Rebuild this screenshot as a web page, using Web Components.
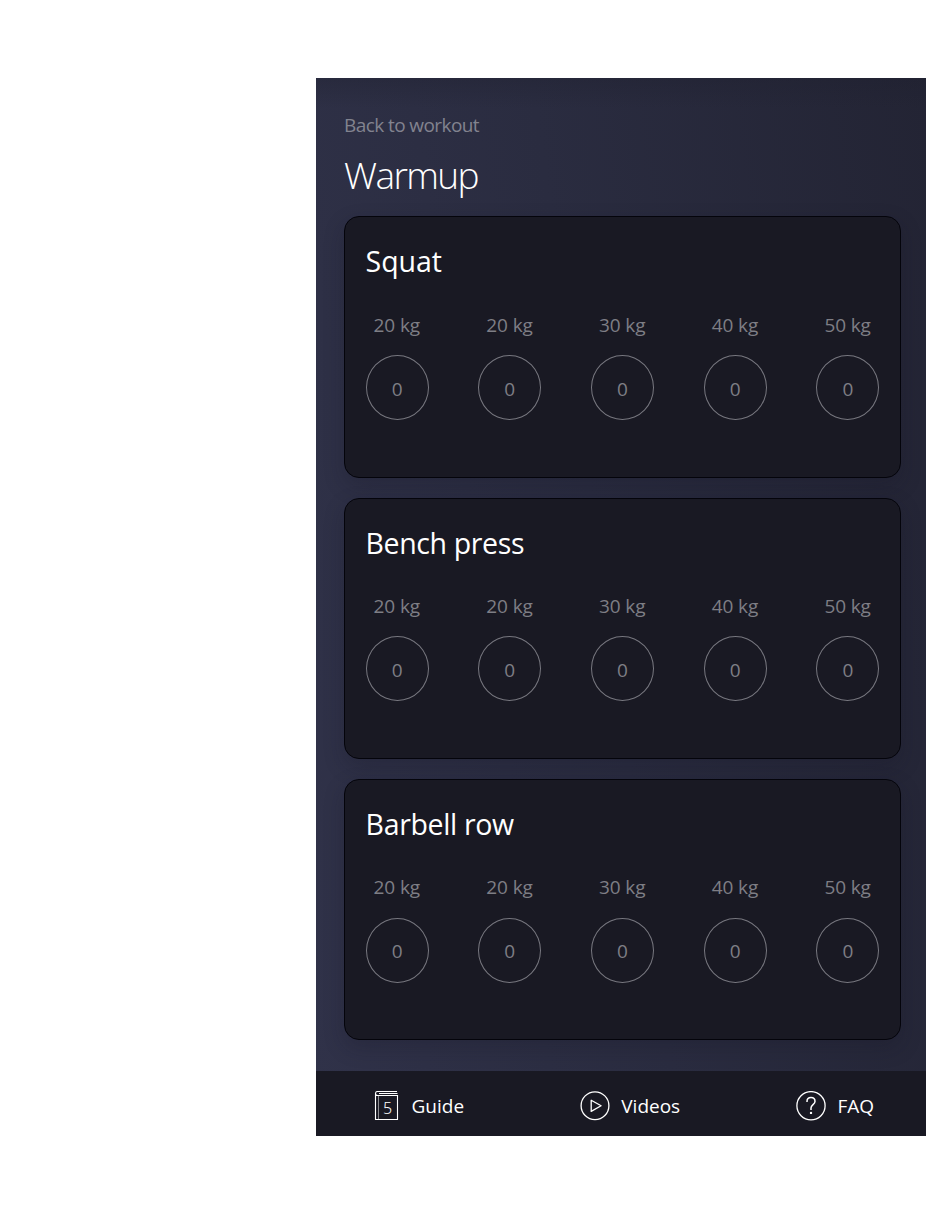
<!DOCTYPE html>
<html lang="en">
<head>
<meta charset="utf-8">
<title>Warmup</title>
<style>
  body { margin: 0; background: #fff; font-family: "Open Sans", "Noto Sans", sans-serif; }
</style>
</head>
<body>
<workout-app>
  <back-link slot="header">Back to workout</back-link>
  <page-title slot="header">Warmup</page-title>
  <exercise-card name="Squat" weights="20,20,30,40,50" style="--name-spacing:-.05px"></exercise-card>
  <exercise-card name="Bench press" weights="20,20,30,40,50" style="--name-spacing:-.38px"></exercise-card>
  <exercise-card name="Barbell row" weights="20,20,30,40,50" style="--name-spacing:-.35px"></exercise-card>
  <nav-bar slot="footer">
    <nav-item icon="guide" style="--icon-gap:12.5px">Guide</nav-item>
    <nav-item icon="videos">Videos</nav-item>
    <nav-item icon="faq">FAQ</nav-item>
  </nav-bar>
</workout-app>
<script>
const define = (tag, render) => customElements.define(tag, class extends HTMLElement {
  constructor() { super(); this.attachShadow({ mode: "open" }); }
  connectedCallback() { this.shadowRoot.innerHTML = render(this); }
});

define("workout-app", () => `
<style>
  :host { display: flex; flex-direction: column; box-sizing: border-box; width: 610px; height: 1058px;
    margin: 78px 0 0 316px; overflow: hidden;
    background: linear-gradient(180deg, rgba(30,31,46,.35), rgba(30,31,46,0) 30px), linear-gradient(82deg, #303249 0%, #2a2c40 48%, #232434 100%); }
  header { height: 138.3px; padding: 0 28px; }
  main { display: flex; flex-direction: column; gap: 20px; padding: 0 25px 0 28px; flex: 1; }
</style>
<header><slot name="header"></slot></header><main><slot></slot></main><slot name="footer"></slot>`);

define("back-link", () => `
<style>
  :host { display: block; padding-top: 33px; font-size: 19px; line-height: 28px; color: #82838f; font-weight: 400; letter-spacing: -.58px; }
</style><slot></slot>`);

define("page-title", () => `
<style>
  :host { display: block; padding-top: 11px; font-size: 37px; line-height: 50px; color: #fff; font-weight: 300; letter-spacing: -1.6px; }
</style><slot></slot>`);

define("exercise-card", el => `
<style>
  :host { display: block; box-sizing: border-box; height: 261.3px; padding: 21px 20.6px 0; border: 1px solid #04040b;
    border-radius: 15px; background: #191923; box-shadow: 0 8px 20px rgba(20,20,34,.25); }
  h2 { margin: 0; font-size: 28.5px; line-height: 46px; color: #fff; font-weight: 400; letter-spacing: var(--name-spacing, 0); }
  .sets { display: flex; justify-content: space-between; margin-top: 26.5px; }
</style>
<h2>${el.getAttribute("name")}</h2>
<div class="sets">${el.getAttribute("weights").split(",").map(w => `<set-counter weight="${w}"></set-counter>`).join("")}</div>`);

define("set-counter", el => `
<style>
  :host { display: flex; flex-direction: column; align-items: center; width: 63px; color: #7e7e85; font-size: 19px; }
  span { line-height: 28px; white-space: nowrap; letter-spacing: -.1px; margin-right: .6px; }
  .ring { box-sizing: border-box; width: 63px; height: 65px; margin-top: 16.3px; padding-top: 2px; border: 1px solid #77777f;
    border-radius: 50%; display: flex; align-items: center; justify-content: center; }
</style>
<span>${el.getAttribute("weight")} kg</span><div class="ring">0</div>`);

define("nav-bar", () => `
<style>
  :host { display: flex; justify-content: space-between; align-items: center; box-sizing: border-box; height: 65px;
    padding: 0 52px 0 58px; background: #191923; }
</style><slot></slot>`);

const icons = {
  guide: `<svg width="25" height="30" viewBox="0 0 25 30" fill="none" stroke="#fff"><path d="M2 4.500h21.500v24h-22v-26q0-2 2-2h19.500M1.500 2.500q0 2 2 2M5 2.500h18.500" stroke-width="1.1"/><path d="M4.500 5v23" stroke-width="1" opacity=".5"/><text x="13.500" y="22.500" font-size="16" text-anchor="middle" fill="#fff" stroke="none" font-family="Noto Sans" font-weight="300">5</text></svg>`,
  videos: `<svg width="30" height="30" viewBox="0 0 30 30" fill="none" stroke="#fff" stroke-width="1.3"><circle cx="15" cy="14.7" r="13.9"/><path d="M11.200 9.200v11.200L21.100 14.800z" stroke-linejoin="round"/></svg>`,
  faq: `<svg width="30" height="30" viewBox="0 0 30 30" fill="none" stroke="#fff" stroke-width="1.3"><circle cx="15" cy="14.7" r="14.1"/><path d="M11 10.900v-.5c0-2.300 1.700-3.800 4-3.800s4 1.500 4 3.800c0 3-4 3.500-4 6.500v2" stroke-width="1.5"/><circle cx="15" cy="21.900" r="1.200" fill="#fff" stroke="none"/></svg>`
};
define("nav-item", el => `
<style>
  :host { display: flex; align-items: center; gap: var(--icon-gap, 11px); height: 65px; padding-top: 5px; box-sizing: border-box; font-size: 19px; line-height: 28px; color: #fff; }
  svg { flex: none; margin-top: -1px; }
</style>${icons[el.getAttribute("icon")]}<span><slot></slot></span>`);
</script>
</body>
</html>
